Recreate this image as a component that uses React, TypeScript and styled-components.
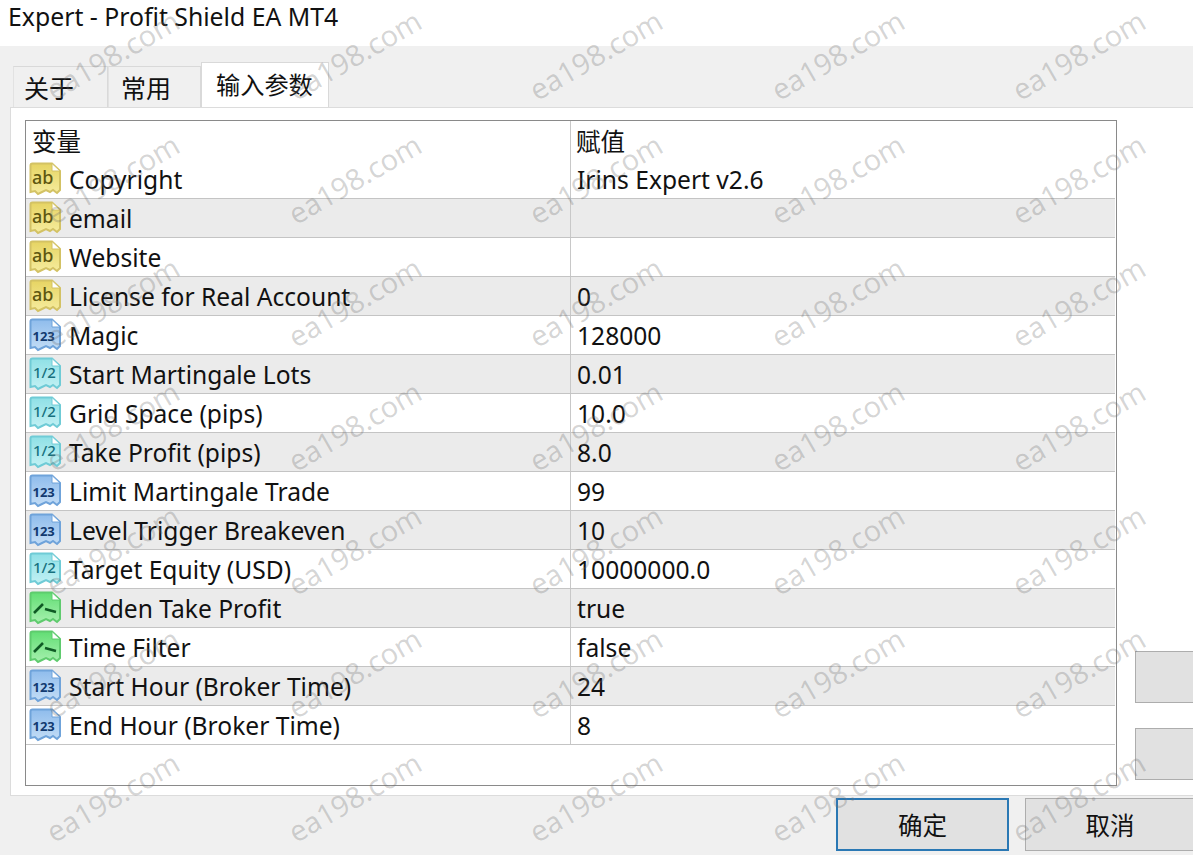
import React from 'react'
import styled, { createGlobalStyle } from 'styled-components'

const GlobalStyle = createGlobalStyle`
  html, body {
    margin: 0;
    padding: 0;
    background: #f0f0f0;
  }
  * {
    box-sizing: border-box;
  }
`

const Window = styled.div`
  position: relative;
  width: 1193px;
  height: 855px;
  overflow: hidden;
  background: #f0f0f0;
  color: #111;
  font-family: 'Noto Sans', 'Noto Sans CJK SC', sans-serif;
  font-size: 24.6px;
`

const TitleBar = styled.div`
  height: 46px;
  background: #fff;
  padding-left: 8px;
  line-height: 33px;
  font-size: 24.8px;
  white-space: nowrap;
`

const TabStrip = styled.div`
  height: 61px;
  padding: 16px 0 0 13px;
  display: flex;
  align-items: flex-end;
`

const Tab = styled.div<{ $width: number; $inset: number; $active?: boolean }>`
  width: ${(p) => p.$width}px;
  height: ${(p) => (p.$active ? 45 : 41)}px;
  background: ${(p) => (p.$active ? '#fff' : '#f0f0f0')};
  border: 1px solid #d9d9d9;
  border-bottom: none;
  border-left: ${(p) => (p.$active ? '1px solid #d9d9d9' : '1px solid #e2e2e2')};
  display: flex;
  align-items: center;
  font-family: 'Noto Sans CJK SC', sans-serif;
  font-size: ${(p) => (p.$active ? 24.2 : 25)}px;
  padding-left: ${(p) => p.$inset}px;
  padding-bottom: ${(p) => (p.$active ? 4 : 1)}px;
`

const Panel = styled.div`
  width: 1300px;
  height: 689px;
  margin-left: 10px;
  background: #fff;
  border: 1px solid #dcdcdc;
  padding: 12px 14px 9px;
  display: flex;
  gap: 18px;
`

const Grid = styled.div`
  width: 1092px;
  height: 666px;
  border: 1px solid #8a8a8a;
  background: #fff;
  padding-right: 1px;
  flex-shrink: 0;
`

const HeaderRow = styled.div`
  height: 39px;
  display: flex;
  font-family: 'Noto Sans CJK SC', sans-serif;
  font-size: 24.5px;
  line-height: 39px;
`

const Row = styled.div<{ $alt: boolean }>`
  height: 39px;
  display: flex;
  background: ${(p) => (p.$alt ? '#ebebeb' : '#fff')};
  border-bottom: 1px solid #c4c4c4;
`

const NameCell = styled.div`
  width: 544px;
  padding-left: 3px;
  display: flex;
  align-items: center;
  gap: 7px;
  white-space: nowrap;
  flex-shrink: 0;
`

const HeaderName = styled.div`
  width: 544px;
  padding-left: 6px;
  flex-shrink: 0;
`

const ValueCell = styled.div`
  flex: 1;
  border-left: 1px solid #c8c8c8;
  padding-left: 6px;
  display: flex;
  align-items: center;
  white-space: nowrap;
`

const HeaderValue = styled.div`
  flex: 1;
  border-left: 1px solid #c8c8c8;
  padding-left: 5px;
`

const SideButtons = styled.div`
  display: flex;
  flex-direction: column;
  justify-content: flex-end;
  gap: 25px;
  padding-bottom: 6px;
`

const SideButton = styled.div`
  width: 100px;
  height: 52px;
  background: #e1e1e1;
  border: 1px solid #adadad;
`

const Footer = styled.div`
  display: flex;
  justify-content: flex-end;
  gap: 16px;
  padding-top: 2px;
  margin-right: -2px;
`

const DialogButton = styled.div<{ $primary?: boolean }>`
  width: ${(p) => (p.$primary ? 173 : 170)}px;
  height: 53px;
  background: #e1e1e1;
  border: ${(p) => (p.$primary ? '2px solid #2a78b4' : '1px solid #adadad')};
  display: flex;
  align-items: center;
  justify-content: center;
  font-family: 'Noto Sans CJK SC', sans-serif;
  font-size: 24.5px;
`

const Watermarks = styled.div`
  position: absolute;
  top: 0;
  left: 0;
  padding: 24px 0 0 12px;
  display: grid;
  grid-template-columns: repeat(5, 200px);
  grid-auto-rows: 60px;
  column-gap: 41.5px;
  row-gap: 63.7px;
  pointer-events: none;
`

const Watermark = styled.span`
  display: flex;
  align-items: center;
  justify-content: center;
  font-family: 'Open Sans', sans-serif;
  font-size: 29px;
  color: rgba(110, 110, 110, 0.3);
  transform: rotate(-30deg);
  white-space: nowrap;
`

type Kind = 'text' | 'int' | 'real' | 'bool'

const iconColors: Record<Kind, { top: string; fill: string; edge: string; ink: string }> = {
  text: { top: '#e6d463', fill: '#f6ec9e', edge: '#d3c264', ink: '#5f5710' },
  int: { top: '#8fbcec', fill: '#c3ddf6', edge: '#6fa3da', ink: '#123a70' },
  real: { top: '#8fe0e6', fill: '#c2f1f4', edge: '#6fcbd6', ink: '#17707e' },
  bool: { top: '#62de74', fill: '#a6f0ae', edge: '#5fcb6e', ink: '#0f5a24' },
}

const TypeIcon = ({ kind }: { kind: Kind }) => {
  const c = iconColors[kind]
  const gradient = `fill-${kind}`
  return (
    <svg width="33" height="34" viewBox="0 0 33 34" style={{ flexShrink: 0 }}>
      <defs>
        <linearGradient id={gradient} x1="0" y1="0" x2="0" y2="1">
          <stop offset="0" stopColor={c.top} />
          <stop offset="1" stopColor={c.fill} />
        </linearGradient>
      </defs>
      <path
        d="M1.5 3.5 Q1.5 1.5 3.5 1.5 H23 L31 9 V28 L28 31 L24 28 L21 30 L17 28 L13 30 L9 32 L6 29 L1.5 30 Z"
        fill={`url(#${gradient})`}
        stroke={c.edge}
        strokeWidth="2"
      />
      <path d="M23 1.5 V9 H31 Z" fill="#fff" stroke={c.edge} strokeWidth="1" />
      {kind === 'text' && (
        <text x="3" y="22" fontFamily="Noto Sans" fontSize="18" fontWeight="500" fill={c.ink}>
          ab
        </text>
      )}
      {kind === 'int' && (
        <text x="3.5" y="23" fontFamily="Noto Sans" fontSize="13" fontWeight="700" fill={c.ink}>
          123
        </text>
      )}
      {kind === 'real' && (
        <text x="4" y="21" fontFamily="Noto Sans" fontSize="15" fontWeight="500" fill={c.ink}>
          1/2
        </text>
      )}
      {kind === 'bool' && (
        <path d="M5 22 L14 13 M16 18 L27 21" fill="none" stroke={c.ink} strokeWidth="2.6" />
      )}
    </svg>
  )
}

const params: { name: string; value: string; kind: Kind }[] = [
  { name: 'Copyright', value: 'Irins Expert v2.6', kind: 'text' },
  { name: 'email', value: '', kind: 'text' },
  { name: 'Website', value: '', kind: 'text' },
  { name: 'License for Real Account', value: '0', kind: 'text' },
  { name: 'Magic', value: '128000', kind: 'int' },
  { name: 'Start Martingale Lots', value: '0.01', kind: 'real' },
  { name: 'Grid Space (pips)', value: '10.0', kind: 'real' },
  { name: 'Take Profit (pips)', value: '8.0', kind: 'real' },
  { name: 'Limit Martingale Trade', value: '99', kind: 'int' },
  { name: 'Level Trigger Breakeven', value: '10', kind: 'int' },
  { name: 'Target Equity (USD)', value: '10000000.0', kind: 'real' },
  { name: 'Hidden Take Profit', value: 'true', kind: 'bool' },
  { name: 'Time Filter', value: 'false', kind: 'bool' },
  { name: 'Start Hour (Broker Time)', value: '24', kind: 'int' },
  { name: 'End Hour (Broker Time)', value: '8', kind: 'int' },
]

const App = () => {
  return (
    <Window>
      <GlobalStyle />
      <TitleBar>Expert - Profit Shield EA MT4</TitleBar>
      <TabStrip>
        <Tab $width={95} $inset={10}>
          关于
        </Tab>
        <Tab $width={93} $inset={12}>
          常用
        </Tab>
        <Tab $width={128} $inset={14} $active>
          输入参数
        </Tab>
      </TabStrip>
      <Panel>
        <Grid>
          <HeaderRow>
            <HeaderName>变量</HeaderName>
            <HeaderValue>赋值</HeaderValue>
          </HeaderRow>
          {params.map((p, i) => (
            <Row key={p.name} $alt={i % 2 === 1}>
              <NameCell>
                <TypeIcon kind={p.kind} />
                {p.name}
              </NameCell>
              <ValueCell>{p.value}</ValueCell>
            </Row>
          ))}
        </Grid>
        <SideButtons>
          <SideButton />
          <SideButton />
        </SideButtons>
      </Panel>
      <Footer>
        <DialogButton $primary>确定</DialogButton>
        <DialogButton>取消</DialogButton>
      </Footer>
      <Watermarks>
        {Array.from({ length: 35 }).map((_, i) => (
          <Watermark key={i}>ea198.com</Watermark>
        ))}
      </Watermarks>
    </Window>
  )
}

export default App
